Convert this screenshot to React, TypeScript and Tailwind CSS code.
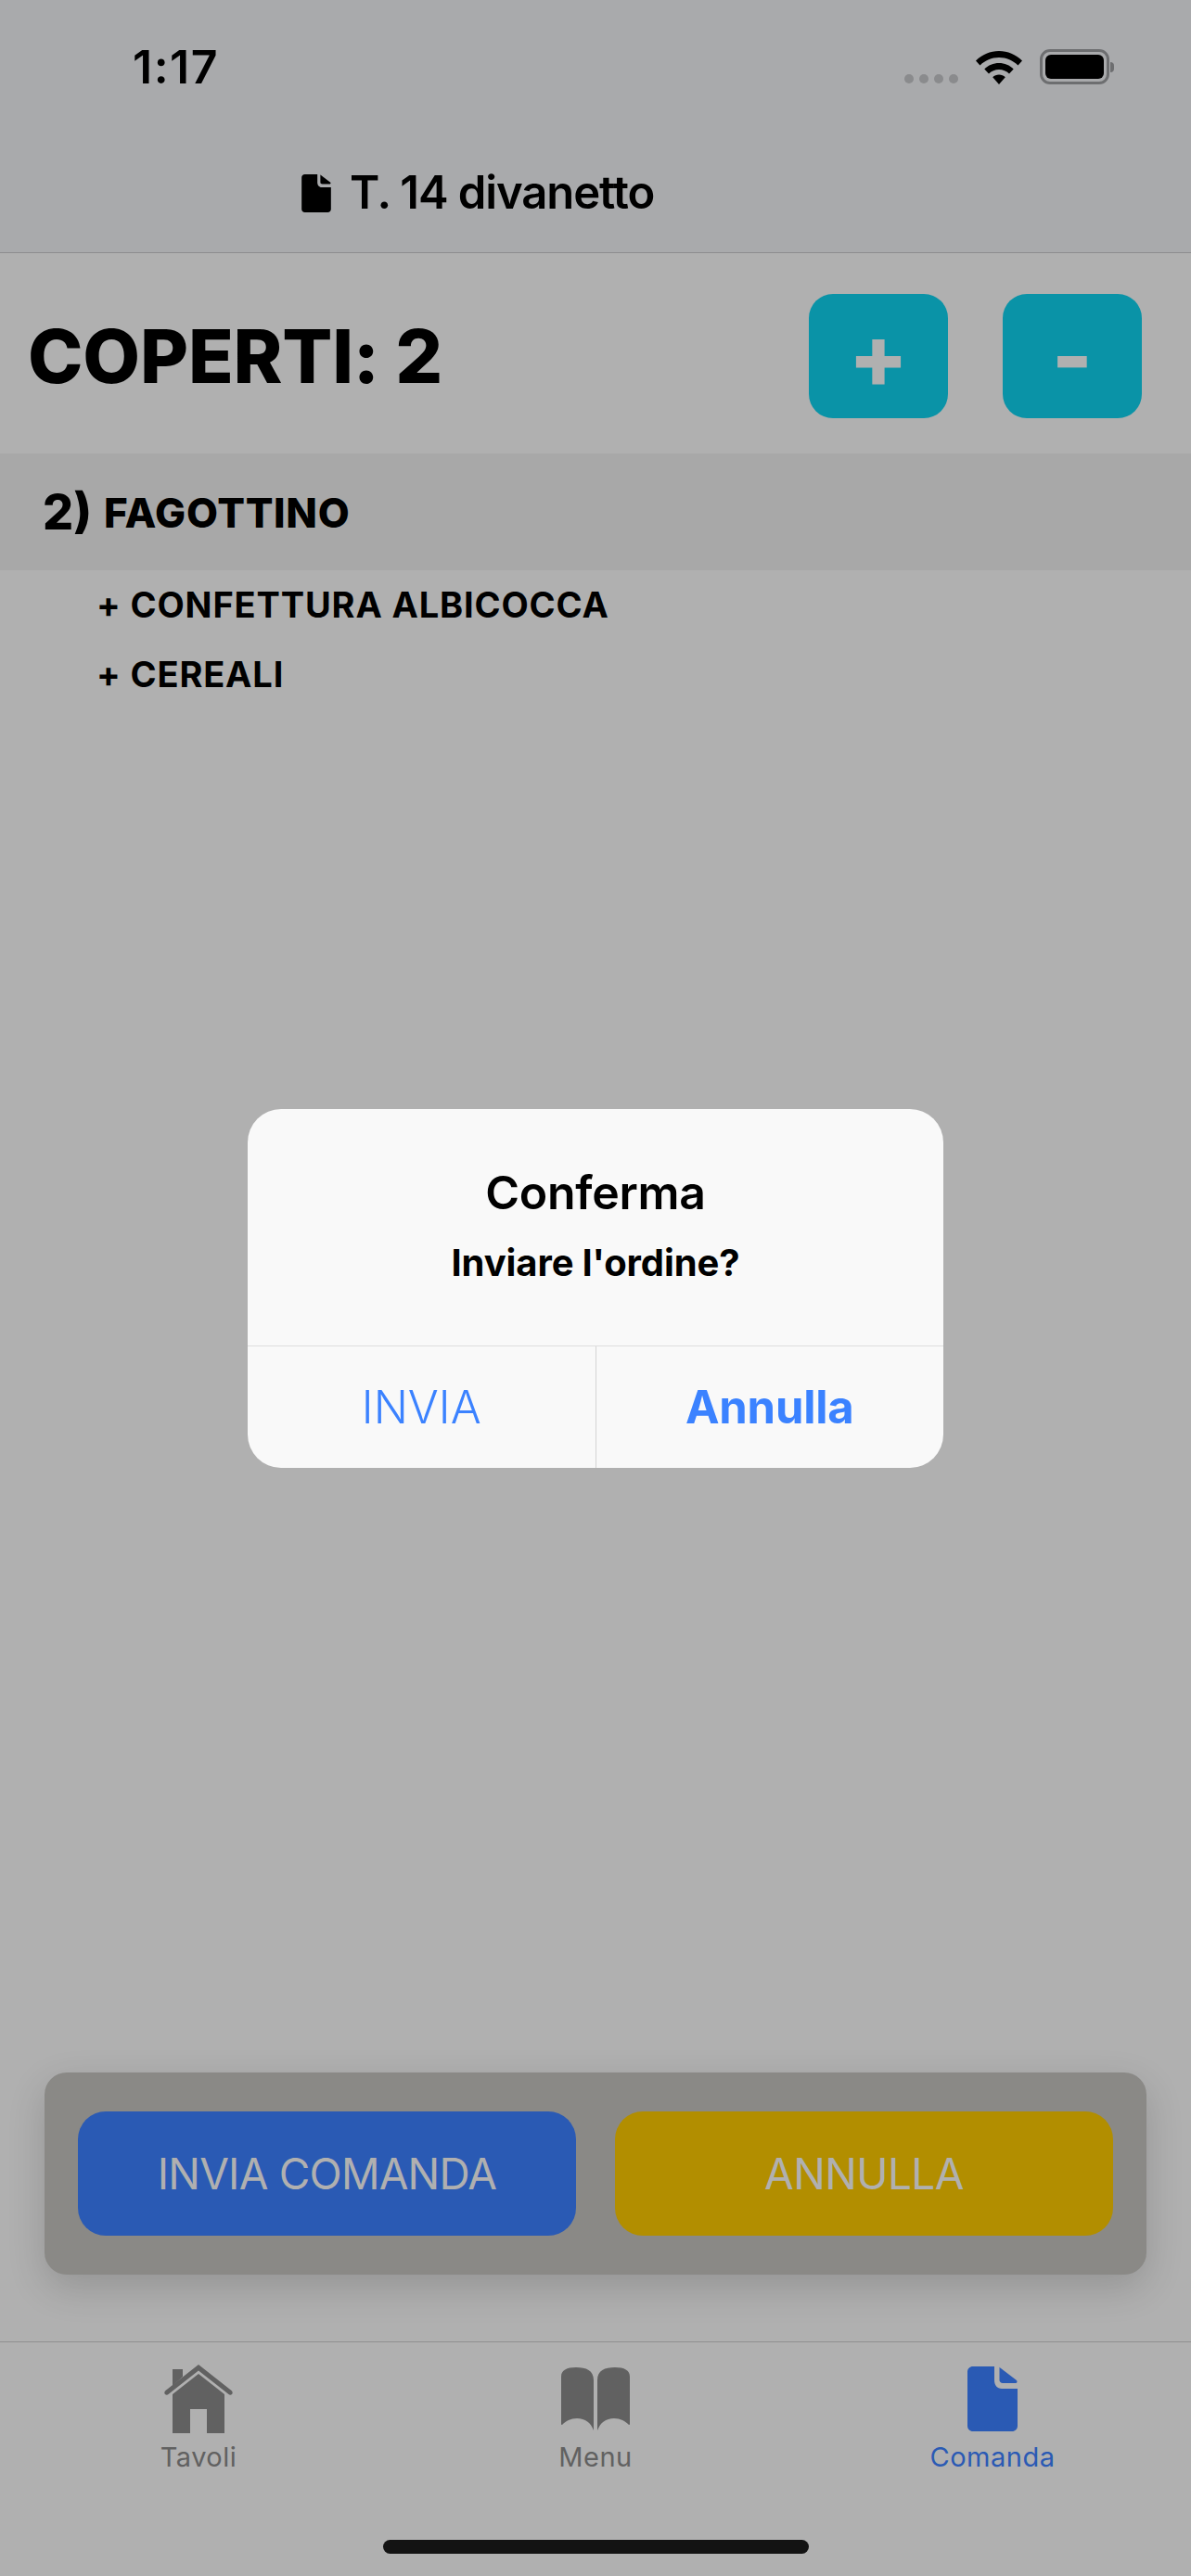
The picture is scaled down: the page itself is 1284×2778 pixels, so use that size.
import React from 'react';

function DocIcon({ className }: { className?: string }) {
  return (
    <svg viewBox="0 0 54 70" className={className} fill="currentColor">
      <path d="M6 0H29V15C29 20 32 24 37 24H54V64C54 67.5 51.5 70 48 70H6C2.5 70 0 67.5 0 64V6C0 2.5 2.5 0 6 0Z" />
      <path d="M34 0.5L53 15C54 16 53.5 18 52 18H38C36 18 34.5 16.5 34.5 15V1C34.5 0.5 33.8 0.3 34 0.5Z" />
    </svg>
  );
}

function HomeIcon() {
  return (
    <svg viewBox="0 0 74 74" className="w-[74px] h-[74px]" fill="#616161">
      <path d="M9 5H20V13L9 23Z" />
      <path d="M37 0L72.5 28C74 29.5 74 31 73 32C72 33 70.5 33 69.5 32L37 6.5L4.5 32C3.5 33 2 33 1 32C0 31 0 29.5 1.5 28Z" />
      <path d="M37 10L65 32V74H46V48H28V74H9V32Z" />
    </svg>
  );
}

function BookIcon() {
  return (
    <svg viewBox="0 0 74 68" className="w-[74px] h-[68px]" fill="#616161">
      <path d="M0 10C0 3 6 0 16 0C27 0 35 3 35 14V68C32 60 26 55 17 55C10 55 5 58 1 62C.5 62 0 61.5 0 61Z" />
      <path d="M74 10C74 3 68 0 58 0C47 0 39 3 39 14V68C42 60 48 55 57 55C64 55 69 58 73 62C73.5 62 74 61.5 74 61Z" />
    </svg>
  );
}

function StatusIcons() {
  return (
    <div className="flex items-end gap-[19px]">
      <div className="flex gap-[6px] mb-[1px]">
        <span className="w-[10px] h-[10px] rounded-full bg-[#8a8b8d]" />
        <span className="w-[10px] h-[10px] rounded-full bg-[#8a8b8d]" />
        <span className="w-[10px] h-[10px] rounded-full bg-[#8a8b8d]" />
        <span className="w-[10px] h-[10px] rounded-full bg-[#8a8b8d]" />
      </div>
      <svg viewBox="0 0 50 36" className="w-[50px] h-[36px]" fill="#000">
        <path d="M25 0C34.5 0 43 3.8 50 10.5L45.5 15.5C40 10.2 33 7 25 7C17 7 10 10.2 4.5 15.5L0 10.5C7 3.8 15.5 0 25 0Z" />
        <path d="M25 13C31 13 36.5 15.4 40.7 19.4L36 24.4C33 21.6 29.2 20 25 20C20.8 20 17 21.6 14 24.4L9.3 19.4C13.5 15.4 19 13 25 13Z" />
        <path d="M25 25.5C27.6 25.5 30 26.5 31.8 28.2L25 36L18.2 28.2C20 26.5 22.4 25.5 25 25.5Z" />
      </svg>
      <div className="flex items-center">
        <div className="w-[75px] h-[38px] rounded-[11px] border-[3px] border-[#6d6e70] p-[3px]">
          <div className="w-full h-full rounded-[6px] bg-black" />
        </div>
        <div className="w-[4px] h-[11px] rounded-r-full bg-[#6d6e70] ml-[1px]" />
      </div>
    </div>
  );
}

function TabItem({ label, color, icon }: { label: string; color: string; icon: React.ReactNode }) {
  return (
    <div className="flex-1 flex flex-col items-center">
      <div className="h-[78px] flex items-center justify-center">{icon}</div>
      <span className={`text-[29px] leading-[36px] mt-[6px] tracking-[0.5px] ${color}`}>{label}</span>
    </div>
  );
}

export default function App() {
  return (
    <div className="relative w-[1284px] h-[2778px] overflow-hidden flex flex-col bg-[#b0b0b0] text-black font-['Inter',sans-serif]">
      {/* Header */}
      <div className="h-[273px] shrink-0 bg-[#a9aaac] border-b-[1px] border-[#8c8c8e] flex flex-col">
        <div className="flex items-center justify-between h-[72px] mt-[36px] pl-[143px] pr-[83px]">
          <span className="text-[50px] leading-none font-semibold tracking-[1.5px]">1:17</span>
          <StatusIcons />
        </div>
        <div className="flex items-center gap-[20px] mt-[70px] pl-[325px]">
          <DocIcon className="w-[32px] h-[41px]" />
          <span className="text-[49px] leading-[60px] font-semibold tracking-[-1.1px]">T. 14 divanetto</span>
        </div>
      </div>

      {/* Coperti */}
      <div className="h-[216px] shrink-0 flex items-center pl-[30px] pr-[53px] pt-[6px]">
        <span className="text-[80px] leading-none font-extrabold tracking-[-0.2px] flex-1">COPERTI: 2</span>
        <div className="flex gap-[59px]">
          <div className="w-[150px] h-[134px] rounded-[26px] bg-[#0a93a7] flex items-center justify-center text-[#b0b0b0]">
            <span className="text-[94px] leading-none font-extrabold">+</span>
          </div>
          <div className="w-[150px] h-[134px] rounded-[26px] bg-[#0a93a7] flex items-center justify-center text-[#b0b0b0]">
            <span className="text-[94px] leading-none font-extrabold">-</span>
          </div>
        </div>
      </div>

      {/* Order */}
      <div className="h-[126px] shrink-0 bg-[#a8a8a8] flex items-center pl-[46px] gap-[13px] pt-[2px]">
        <span className="text-[52px] font-extrabold leading-none">2)</span>
        <span className="text-[44px] font-extrabold leading-none tracking-[0.7px]">FAGOTTINO</span>
      </div>
      <div className="flex flex-col pl-[104px] pt-[10px] gap-[20px] flex-1">
        <span className="text-[38px] leading-[55px] font-bold tracking-[0.85px]">+ CONFETTURA ALBICOCCA</span>
        <span className="text-[38px] leading-[55px] font-bold tracking-[0.85px]">+ CEREALI</span>
      </div>

      {/* Action panel */}
      <div className="mx-[48px] h-[218px] shrink-0 rounded-[24px] bg-[#8a8986] shadow-[0_14px_40px_rgba(0,0,0,0.16)] flex items-center gap-[42px] px-[36px]">
        <div className="flex-1 h-[134px] rounded-[30px] bg-[#2a5ab4] flex items-center justify-center text-[#b0b0b0] text-[46px] tracking-[-0.8px]">
          INVIA COMANDA
        </div>
        <div className="flex-1 h-[134px] rounded-[30px] bg-[#b28e00] flex items-center justify-center text-[#b0b0b0] text-[46px] tracking-[-0.6px]">
          ANNULLA
        </div>
      </div>

      {/* Tab bar */}
      <div className="mt-[72px] h-[253px] shrink-0 border-t-[1px] border-[#8f8f8f] flex flex-col">
        <div className="flex w-full pt-[22px]">
          <TabItem label="Tavoli" color="text-[#616161]" icon={<HomeIcon />} />
          <TabItem label="Menu" color="text-[#616161]" icon={<BookIcon />} />
          <TabItem label="Comanda" color="text-[#2a5ab4]" icon={<DocIcon className="w-[54px] h-[70px] text-[#2a5ab4]" />} />
        </div>
        <div className="mt-auto mb-[24px] mx-auto w-[459px] h-[15px] rounded-full bg-[#131313]" />
      </div>

      {/* Alert dialog */}
      <div className="absolute left-[267px] top-[1196px] w-[750px] h-[387px] rounded-[36px] bg-[#f9f9f9] flex flex-col">
        <div className="h-[255px] flex flex-col items-center pt-[59px]">
          <span className="text-[50px] leading-[62px] font-semibold tracking-[-0.3px]">Conferma</span>
          <span className="text-[40px] leading-[48px] font-bold mt-[21px] tracking-[-0.1px]">Inviare l'ordine?</span>
        </div>
        <div className="flex flex-1 border-t-[1px] border-[#dedede] text-[#3b82ff] text-[49px]">
          <div className="flex-1 flex items-center justify-center border-r-[1px] border-[#d4d4d4] font-light">INVIA</div>
          <div className="flex-1 flex items-center justify-center font-bold tracking-[-0.2px]">Annulla</div>
        </div>
      </div>
    </div>
  );
}
